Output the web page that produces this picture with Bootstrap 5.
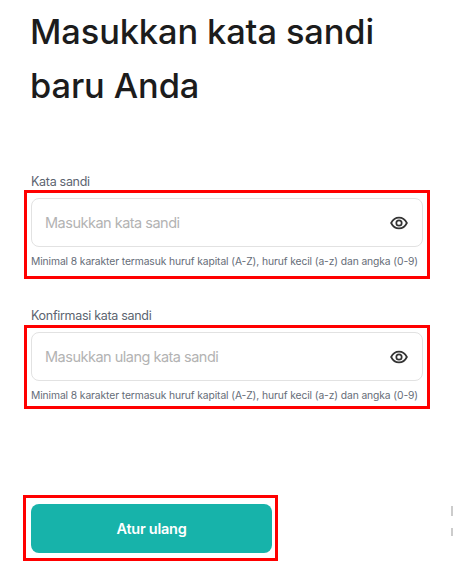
<!DOCTYPE html>
<html lang="id">
<head>
<meta charset="utf-8">
<title>Masukkan kata sandi baru Anda</title>
<link href="https://cdn.jsdelivr.net/npm/bootstrap@5.3.0/dist/css/bootstrap.min.css" rel="stylesheet">
<style>
html,body{height:583px;overflow:hidden;background:#fff}
body{font-family:Inter,"Noto Sans",sans-serif;position:relative}
.page-wrap{padding:5px 0 0 31px;width:453px}
.page-title{font-family:Inter,sans-serif;font-size:34.4px;font-weight:500;line-height:54px;color:#1c1c1c;margin:0 0 60px -1px;letter-spacing:-.1px;width:380px}
.field-label{display:block;font-size:12.5px;line-height:17px;color:#5c6470;margin:0;letter-spacing:-.3px}
.red-frame{border:3px solid #f00;margin-left:-7px;width:406px;padding:5px 4px 8px 4px}
.frame-second{margin-top:1px;padding:4px 4px 4px 4px}
.pw-box{width:392px;height:49px;border:1px solid #e2e2e2;border-radius:8px;padding:0 14px 0 13px;background:#fff}
.pw-input{border:0;outline:0;flex:1;min-width:0;padding:0;font-size:14.5px;letter-spacing:-.5px;color:#333;background:transparent}
.pw-input::placeholder{color:#b3b3b3;opacity:1}
.hint-text{font-size:10.3px;line-height:14px;color:#666d78;margin:7px 0 0;white-space:nowrap;letter-spacing:-.1px}
.field-gap{margin-top:28px}
.btn-frame{border:3px solid #f00;margin:86px 0 0 -8px;width:255px;height:66px;padding:6px 3px 0 5px}
.btn-reset{width:241px;height:49px;background:#17b3aa;border:0;border-radius:8px;color:#fff;font-size:14.5px;font-weight:600;letter-spacing:-.25px;padding:0}
.btn-reset:hover{background:#17b3aa;color:#fff}
.edge-marks{position:absolute;left:451px;top:506px;width:2px;overflow:hidden}
.edge-marks i{display:block;background:#ccc}
.em-a{height:10px;margin-bottom:12px}
.em-b{height:8px;width:2px}
</style>
</head>
<body>
<main class="page-wrap">
<h1 class="page-title">Masukkan kata sandi baru Anda</h1>
<form>
<label class="field-label" for="p1">Kata sandi</label>
<div class="red-frame">
<div class="pw-box d-flex align-items-center">
<input id="p1" class="pw-input" type="password" placeholder="Masukkan kata sandi">
<svg width="18" height="18" viewBox="0 0 24 24" fill="none" stroke="#333" stroke-width="2.3"><path d="M1.5 12C4 7 7.7 4.7 12 4.7S20 7 22.5 12C20 17 16.3 19.3 12 19.3S4 17 1.5 12Z"/><circle cx="12" cy="12" r="3.6"/></svg>
</div>
<p class="hint-text">Minimal 8 karakter termasuk huruf kapital (A-Z), huruf kecil (a-z) dan angka (0-9)</p>
</div>
<label class="field-label field-gap" for="p2">Konfirmasi kata sandi</label>
<div class="red-frame frame-second">
<div class="pw-box d-flex align-items-center">
<input id="p2" class="pw-input" type="password" placeholder="Masukkan ulang kata sandi">
<svg width="18" height="18" viewBox="0 0 24 24" fill="none" stroke="#333" stroke-width="2.3"><path d="M1.5 12C4 7 7.7 4.7 12 4.7S20 7 22.5 12C20 17 16.3 19.3 12 19.3S4 17 1.5 12Z"/><circle cx="12" cy="12" r="3.6"/></svg>
</div>
<p class="hint-text">Minimal 8 karakter termasuk huruf kapital (A-Z), huruf kecil (a-z) dan angka (0-9)</p>
</div>
<div class="btn-frame">
<button type="button" class="btn btn-reset">Atur ulang</button>
</div>
</form>
</main>
<div class="edge-marks" aria-hidden="true"><i class="em-a"></i><i class="em-b"></i></div>
<script src="https://cdn.jsdelivr.net/npm/bootstrap@5.3.0/dist/js/bootstrap.bundle.min.js"></script>
</body>
</html>
